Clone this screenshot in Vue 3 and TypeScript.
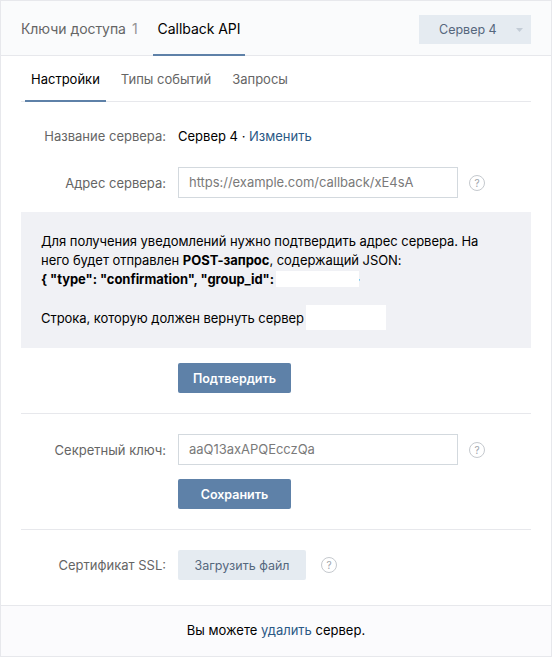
<script setup lang="ts">
const topTabs = [
  { label: 'Ключи доступа', count: '1', active: false },
  { label: 'Callback API', count: '', active: true },
]
const subTabs = [
  { label: 'Настройки', active: true },
  { label: 'Типы событий', active: false },
  { label: 'Запросы', active: false },
]
</script>

<template>
  <div class="page">
    <header class="head">
      <nav class="top-tabs">
        <div v-for="t in topTabs" :key="t.label" class="top-tab" :class="{ on: t.active }">
          {{ t.label }}<span v-if="t.count" class="count">{{ t.count }}</span>
        </div>
      </nav>
      <div class="drop">
        <span>Сервер 4</span>
        <svg class="caret" width="7" height="4" viewBox="0 0 7 4"><path d="M0 0h7L3.500 4z" fill="#c3ccd6" /></svg>
      </div>
    </header>

    <main class="body">
      <nav class="sub-tabs">
        <div v-for="t in subTabs" :key="t.label" class="sub-tab" :class="{ on: t.active }">{{ t.label }}</div>
      </nav>

      <div class="row name-row">
        <div class="label">Название сервера:</div>
        <div class="value">Сервер 4 · <a class="link">Изменить</a></div>
      </div>

      <div class="row addr-row">
        <div class="label">Адрес сервера:</div>
        <div class="input">https://example.com/callback/xE4sA</div>
        <span class="help">?</span>
      </div>

      <section class="note">
        <p>Для получения уведомлений нужно подтвердить адрес сервера. На<br />него будет отправлен <b>POST-запрос</b>, содержащий JSON:<br /><b>{ "type": "confirmation", "group_id":</b><span class="mask m1"></span><b class="brace">}</b></p>
        <p class="second">Строка, которую должен вернуть сервер<span class="mask m2"></span></p>
      </section>

      <div class="actions confirm"><button class="btn primary w113">Подтвердить</button></div>

      <hr class="rule first" />

      <div class="row secret-row">
        <div class="label">Секретный ключ:</div>
        <div class="input">aaQ13axAPQEcczQa</div>
        <span class="help">?</span>
      </div>
      <div class="actions save"><button class="btn primary w113">Сохранить</button></div>

      <hr class="rule second-rule" />

      <div class="row ssl-row">
        <div class="label">Сертификат SSL:</div>
        <button class="btn secondary">Загрузить файл</button>
        <span class="help">?</span>
      </div>
    </main>

    <footer class="foot">Вы можете <a class="link">удалить</a> сервер.</footer>
  </div>
</template>

<style>
html, body { margin: 0; background: #fff; }
</style>

<style scoped>
.page {
  box-sizing: border-box;
  width: 552px;
  height: 657px;
  border: 1px solid #e7e8ec;
  display: flex;
  flex-direction: column;
  font-family: Inter, "Liberation Sans", Arial, sans-serif;
  font-size: 13px;
  color: #000;
  background: #fff;
  overflow: hidden;
}
.head {
  height: 55px;
  flex: none;
  box-sizing: border-box;
  border-bottom: 1px solid #e7e8ec;
  background: #fafbfc;
  display: flex;
  justify-content: space-between;
  padding: 0 20px;
}
.top-tabs { display: flex; gap: 15px; }
.top-tab {
  padding: 19px 5px 0;
  height: 55px;
  box-sizing: border-box;
  font-size: 14px;
  letter-spacing: -0.05px;
  color: #656565;
  border-bottom: 2px solid transparent;
}
.top-tab:first-child { padding-left: 0; padding-right: 0; }
.top-tab.on { color: #000; border-bottom-color: #5e81a8; }
.count { color: #939393; margin-left: 6px; }
.drop {
  margin-top: 14px;
  width: 112px;
  height: 29px;
  box-sizing: border-box;
  background: #e5ebf1;
  color: #55677d;
  font-size: 12.500px;
  display: flex;
  align-items: center;
  padding: 0 8px 0 20px;
  justify-content: space-between;
}
.caret { display: block; }
.body { flex: 1; padding: 0 20px; }
.sub-tabs { display: flex; border-bottom: 1px solid #e7e8ec; padding-left: 4px; height: 46px; box-sizing: border-box; }
.sub-tab {
  padding: 15px 6px 0;
  margin-right: 9px;
  height: 46px;
  box-sizing: border-box;
  color: #656565;
  border-bottom: 2px solid transparent;
}
.sub-tab.on { color: #000; border-bottom-color: #5e81a8; }
.row { display: flex; align-items: center; }
.label { width: 145px; text-align: right; margin-right: 12px; color: #656565; flex: none; }
.name-row { margin-top: 26px; height: 16px; }
.addr-row { margin-top: 23px; }
.input {
  width: 280px;
  height: 31px;
  box-sizing: border-box;
  border: 1px solid #d3d9de;
  padding: 0 10px;
  line-height: 29px;
  letter-spacing: -0.03px;
  color: #7a7a7a;
  background: #fff;
}
.help {
  width: 16px;
  height: 16px;
  box-sizing: border-box;
  border: 1px solid #c5c9ce;
  border-radius: 50%;
  margin-left: 11px;
  font-size: 10px;
  line-height: 14px;
  text-align: center;
  color: #a0a5ab;
}
.note {
  margin-top: 14px;
  height: 136px;
  box-sizing: border-box;
  background: #f0f1f5;
  padding: 20px 20px 0;
  line-height: 19px;
  letter-spacing: -0.05px;
}
.note p { margin: 0; }
.note .second { margin-top: 20px; }
.mask { display: inline-block; background: #fff; vertical-align: top; position: relative; z-index: 1; }
.m1 { width: 83px; height: 16px; margin-top: 1px; margin-left: 2px; }
.m2 { width: 80px; height: 25px; margin-top: -4px; margin-bottom: -3px; margin-left: 2px; }
.brace { margin-left: -5px; color: #2a5885; }
.actions { padding-left: 157px; }
.confirm { margin-top: 15px; }
.btn {
  height: 30px;
  border: 0;
  border-radius: 2px;
  font-family: inherit;
  font-size: 12.500px;
  padding: 0;
  display: block;
}
.primary { background: #5e81a8; color: #fff; font-weight: 600; }
.w113 { width: 113px; }
.rule { margin: 0; border: 0; border-top: 1px solid #e7e8ec; }
.first { margin-top: 20px; }
.secret-row { margin-top: 20px; }
.save { margin-top: 14px; }
.second-rule { margin-top: 20px; }
.ssl-row { margin-top: 20px; }
.secondary { width: 128px; background: #e5ebf1; color: #55677d; }
.ssl-row .help { margin-left: 15px; }
.link { color: #2a5885; }
.foot {
  flex: none;
  height: 51px;
  box-sizing: border-box;
  border-top: 1px solid #e7e8ec;
  background: #fbfbfd;
  text-align: center;
  line-height: 49px;
}
</style>
